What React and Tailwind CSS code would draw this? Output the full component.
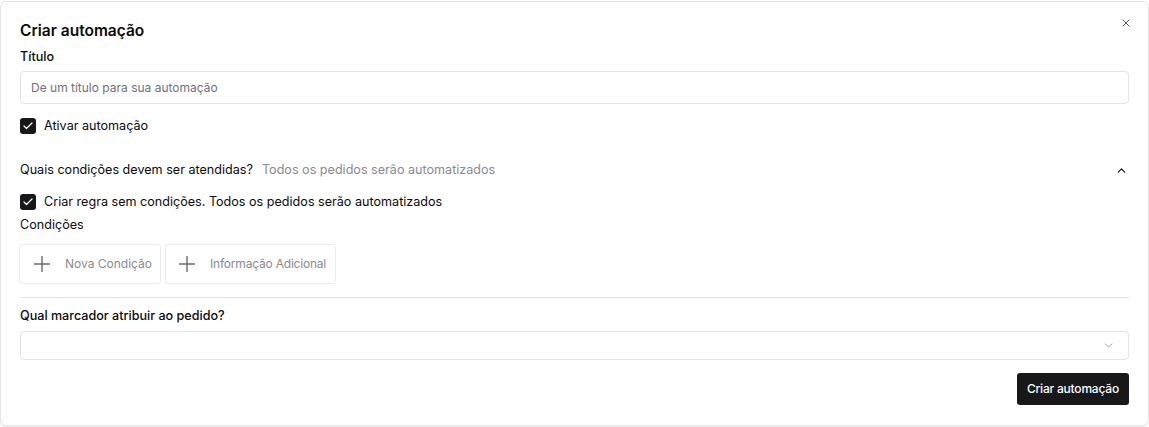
import React from "react";
import { Check, X, ChevronUp, ChevronDown } from "lucide-react";

function CheckBox({ label }) {
    return (
        <label className="flex items-center gap-2 h-5">
            <span className="w-4 h-4 rounded-[3px] bg-[#18181b] flex items-center justify-center">
                <Check size={12} strokeWidth={2.5} color="white" />
            </span>
            <span className="text-[12.6px] text-[#0a0a0a]">{label}</span>
        </label>
    );
}

function PlusIcon() {
    return (
        <svg width="18" height="18" viewBox="0 0 18 18" className="text-[#6b6b70]">
            <path d="M9 1v16M1 9h16" stroke="currentColor" strokeWidth="1.4" />
        </svg>
    );
}

export default function App() {
    return (
        <div className="w-[1149px] h-[427px] bg-white pt-px font-['Inter',sans-serif]">
            <div className="relative h-[425px] border border-[#e4e4e7] rounded-md shadow-[0_1px_2px_rgba(0,0,0,0.08)] px-[19px] pt-[15px]">
                <button className="absolute right-[16px] top-[15px] text-[#52525b]">
                    <X size={12} strokeWidth={2} />
                </button>

                <h2 className="text-[15.5px] font-semibold leading-7 text-[#0a0a0a]">
                    Criar automação
                </h2>

                <div className="mt-[2px] text-[12.6px] font-medium leading-5 text-[#0a0a0a]">Título</div>
                <input
                    className="mt-1 w-full h-[33px] border border-[#e4e4e7] rounded-[4px] px-[10px] text-xs outline-none placeholder:text-[#71717a]"
                    placeholder="De um título para sua automação"
                />

                <div className="mt-[12px]">
                    <CheckBox label="Ativar automação" />
                </div>

                <div className="mt-[24px] flex items-center justify-between h-5">
                    <div className="text-[12.6px] leading-5">
                        <span className="text-[#0a0a0a]">Quais condições devem ser atendidas?</span>
                        <span className="ml-[9px] text-[#8a8a8f]">Todos os pedidos serão automatizados</span>
                    </div>
                    <ChevronUp size={13} strokeWidth={2} className="mr-[1px] text-[#0a0a0a]" />
                </div>

                <div className="mt-[12px]">
                    <CheckBox label="Criar regra sem condições. Todos os pedidos serão automatizados" />
                </div>

                <div className="mt-[3px] text-[12.6px] leading-5 text-[#0a0a0a]">Condições</div>

                <div className="mt-[9px] -ml-px flex gap-[4px]">
                    <button className="h-10 border border-[#ececef] rounded-[3px] pl-[13px] pr-[8px] flex items-center gap-[14px] text-xs text-[#8a8a8f]">
                        <PlusIcon />
                        Nova Condição
                    </button>
                    <button className="h-10 border border-[#ececef] rounded-[3px] pl-[12px] pr-[9px] flex items-center gap-[14px] text-xs tracking-[-0.2px] text-[#8a8a8f]">
                        <PlusIcon />
                        Informação Adicional
                    </button>
                </div>

                <div className="mt-[13px] h-px bg-[#e4e4e7]" />

                <div className="mt-[8px] text-[12.6px] leading-5 font-medium text-[#0a0a0a]">
                    Qual marcador atribuir ao pedido?
                </div>
                <div className="mt-[5px] h-[29px] border border-[#e4e4e7] rounded-[4px] flex items-center justify-end pr-[13px]">
                    <ChevronDown size={13} strokeWidth={1.5} className="text-[#8a8a8f]" />
                </div>

                <div className="mt-[13px] flex justify-end">
                    <button className="h-8 px-[10px] bg-[#18181b] text-white text-xs font-medium rounded-[3px] tracking-[-0.2px]">
                        Criar automação
                    </button>
                </div>
            </div>
        </div>
    );
}
